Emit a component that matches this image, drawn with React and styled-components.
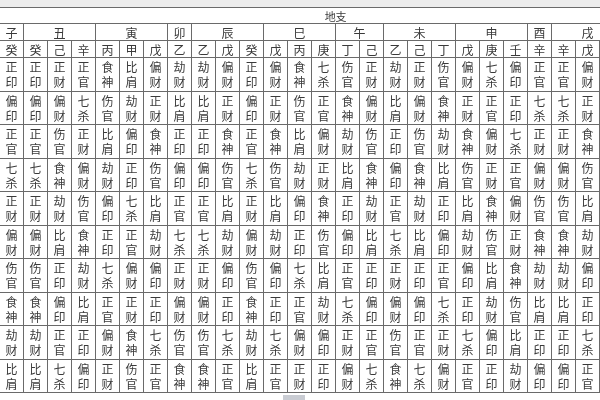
import React from 'react';
import styled, { createGlobalStyle } from 'styled-components';

const GlobalStyle = createGlobalStyle`
  * { box-sizing: border-box; }
  html, body {
    margin: 0;
    padding: 0;
    background: #fff;
    overflow: hidden;
  }
  body {
    font-family: "Noto Sans CJK SC", "Noto Sans", sans-serif;
    color: #3a3a3a;
  }
`;

const Page = styled.div`
  width: 600px;
  height: 400px;
  overflow: hidden;
  display: flex;
  flex-direction: column;
  filter: blur(0.35px);
`;

const TopBand = styled.div`
  height: 7px;
  flex: none;
  background: #ececec;
`;

// 表格左边被裁掉一像素，和原图一样看不到最左侧的竖线
const Table = styled.table`
  border-collapse: collapse;
  table-layout: fixed;
  width: 672px;
  margin-left: -1px;
  flex: none;
  font-size: 12px;
  line-height: 15px;
`;

const Cell = styled.td`
  border: 1px solid #6a6a6a;
  padding: 0;
  text-align: center;
  vertical-align: middle;
  overflow: hidden;
  white-space: nowrap;
`;

const TitleCell = styled(Cell)`
  height: 16px;
  font-size: 11px;
  line-height: 14px;
`;

const BranchCell = styled(Cell)`
  height: 17px;
`;

const StemCell = styled(Cell)`
  height: 17px;
`;

const GodCell = styled(Cell)`
  height: 33.5px;
  line-height: 15px;
`;

const GodChar = styled.span`
  display: block;
`;

const Footer = styled.div`
  flex: 1;
  display: flex;
  align-items: flex-end;
  padding-left: 283px;
`;

const Thumb = styled.div`
  width: 22px;
  height: 5px;
  background: #c9ccd3;
`;

const STEMS = '甲乙丙丁戊己庚辛壬癸';

// 地支藏干
const branches = [
  { name: '子', hidden: ['癸'] },
  { name: '丑', hidden: ['癸', '己', '辛'] },
  { name: '寅', hidden: ['丙', '甲', '戊'] },
  { name: '卯', hidden: ['乙'] },
  { name: '辰', hidden: ['乙', '戊', '癸'] },
  { name: '巳', hidden: ['戊', '丙', '庚'] },
  { name: '午', hidden: ['丁', '己'] },
  { name: '未', hidden: ['乙', '己', '丁'] },
  { name: '申', hidden: ['戊', '庚', '壬'] },
  { name: '酉', hidden: ['辛'] },
  { name: '戌', hidden: ['辛', '戊', '丁'] },
  { name: '亥', hidden: ['壬', '甲'] }
];

const GODS = [
  ['比肩', '劫财'],
  ['食神', '伤官'],
  ['偏财', '正财'],
  ['七杀', '正官'],
  ['偏印', '正印']
];

// 日干对藏干的十神
const tenGod = (day, other) => {
  const d = STEMS.indexOf(day);
  const s = STEMS.indexOf(other);
  const rel = (Math.floor(s / 2) - Math.floor(d / 2) + 5) % 5;
  return GODS[rel][d % 2 === s % 2 ? 0 : 1];
};

const columns = branches.flatMap(b => b.hidden);

const App = () => {
  return (
    <>
      <GlobalStyle />
      <Page>
        <TopBand />
        <Table>
          <colgroup>
            {columns.map((c, i) => (
              <col key={i} style={{ width: 24 }} />
            ))}
          </colgroup>
          <tbody>
            <tr>
              <TitleCell colSpan={columns.length}>地支</TitleCell>
            </tr>
            <tr>
              {branches.map(b => (
                <BranchCell key={b.name} colSpan={b.hidden.length}>{b.name}</BranchCell>
              ))}
            </tr>
            <tr>
              {columns.map((c, i) => (
                <StemCell key={i}>{c}</StemCell>
              ))}
            </tr>
            {STEMS.split('').map(day => (
              <tr key={day}>
                {columns.map((c, i) => {
                  const god = tenGod(day, c);
                  return (
                    <GodCell key={i}>
                      <GodChar>{god[0]}</GodChar>
                      <GodChar>{god[1]}</GodChar>
                    </GodCell>
                  );
                })}
              </tr>
            ))}
          </tbody>
        </Table>
        <Footer>
          <Thumb />
        </Footer>
      </Page>
    </>
  );
};

export default App;
